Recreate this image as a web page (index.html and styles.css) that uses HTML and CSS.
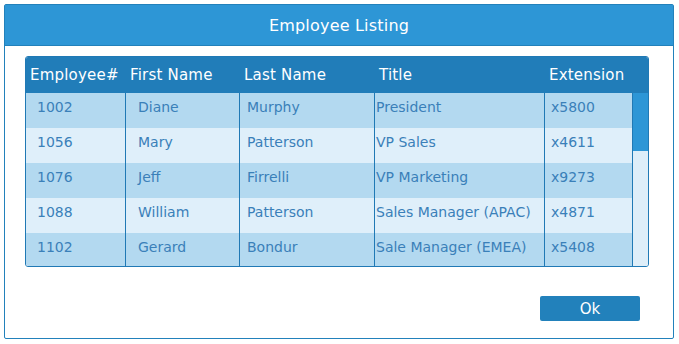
FILE: index.html
```html
<!DOCTYPE html>
<html lang="en">

<head>
    <meta charset="UTF-8">
    <meta name="viewport" content="width=device-width, initial-scale=1.0">
    <title>Employee Listing</title>
    <link rel="stylesheet" href="styles.css">
</head>

<body>

    <div class="dialog">
        <div class="dialog-header">
            <h1>Employee Listing</h1>
        </div>

        <div class="dialog-body">
            <div class="grid">
                <div class="grid-head">
                    <span>Employee#</span>
                    <span>First Name</span>
                    <span>Last Name</span>
                    <span>Title</span>
                    <span>Extension</span>
                </div>
                <div class="grid-body">
                    <div class="grid-rows">
                        <div class="row"><span>1002</span><span>Diane</span><span>Murphy</span><span>President</span><span>x5800</span></div>
                        <div class="row"><span>1056</span><span>Mary</span><span>Patterson</span><span>VP Sales</span><span>x4611</span></div>
                        <div class="row"><span>1076</span><span>Jeff</span><span>Firrelli</span><span>VP Marketing</span><span>x9273</span></div>
                        <div class="row"><span>1088</span><span>William</span><span>Patterson</span><span>Sales Manager (APAC)</span><span>x4871</span></div>
                        <div class="row"><span>1102</span><span>Gerard</span><span>Bondur</span><span>Sale Manager (EMEA)</span><span>x5408</span></div>
                    </div>
                    <!-- scroll rail, drawn by hand so it always shows -->
                    <div class="rail">
                        <div class="thumb"></div>
                    </div>
                </div>
            </div>

            <div class="dialog-footer">
                <button class="ok-btn">Ok</button>
            </div>
        </div>
    </div>

</body>

</html>
```

FILE: styles.css
```css
body {
    margin: 4px;
    font-family: "DejaVu Sans", sans-serif;
}

.dialog {
    width: 668px;
    height: 333px;
    border: 1px solid #2281bb;
    border-radius: 2px;
    display: flex;
    flex-direction: column;
}

.dialog-header {
    background-color: #2d96d6;
    border-bottom: 1px solid #2281bb;
    height: 40px;
    display: flex;
    align-items: center;
    justify-content: center;
}

.dialog-header h1 {
    margin: 0;
    color: #fff;
    font-size: 16px;
    font-weight: normal;
    letter-spacing: 0.2px;
}

.dialog-body {
    padding: 10px 0 0 20px;
}

.grid {
    width: 622px;
    border: 1px solid #2079b5;
    border-radius: 3px;
    overflow: hidden;
}

.grid-head,
.row {
    display: grid;
    grid-template-columns: 100px 114px 135px 170px 88px;
}

.grid-head {
    background-color: #217db9;
    height: 36px;
    align-items: center;
    color: #fff;
    font-size: 15px;
    letter-spacing: 0.2px;
}

.grid-head span {
    padding-left: 4px;
}

.grid-body {
    display: flex;
    height: 173px;
}

.grid-rows {
    flex: 1;
    overflow: hidden;
}

.rail {
    width: 15px;
    background-color: #deeef9;
}

.thumb {
    height: 58px;
    background-color: #2d96d6;
}

.row {
    height: 35px;
    color: #3a80b9;
    font-size: 14px;
}

.row:nth-child(odd) {
    background-color: #b3d9f0;
}

.row:nth-child(even) {
    background-color: #dfeffa;
}

.row span {
    padding-top: 6px;
    border-right: 1px solid #2079b5;
    white-space: nowrap;
}

.row span:nth-child(1) {
    padding-left: 11px;
}

.row span:nth-child(2) {
    padding-left: 12px;
}

.row span:nth-child(3) {
    padding-left: 7px;
}

.row span:nth-child(4) {
    padding-left: 1px;
}

.row span:nth-child(5) {
    padding-left: 6px;
}

.dialog-footer {
    display: flex;
    justify-content: flex-end;
    padding: 29px 33px 0 0;
}

.ok-btn {
    width: 100px;
    height: 25px;
    border: none;
    border-radius: 2px;
    background-color: #2281bb;
    color: #fff;
    font-family: inherit;
    font-size: 15px;
}
```
